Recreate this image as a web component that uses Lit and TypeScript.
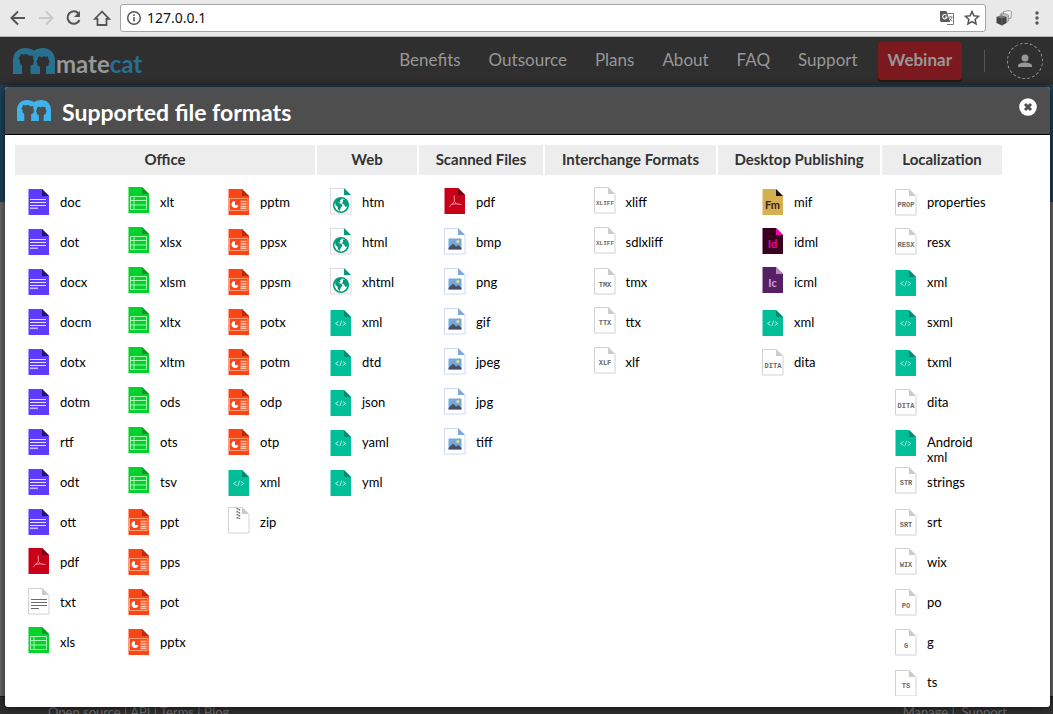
import { LitElement, html, svg, css } from "lit";
import { customElement, property } from "lit/decorators.js";

type Entry = [icon: string, label: string];
interface Category {
  title: string;
  lists: Entry[][];
}

const all = (icon: string, names: string): Entry[] =>
  names.split(" ").map((name) => [icon, name] as Entry);

const categories: Category[] = [
  {
    title: "Office",
    lists: [
      [...all("doc", "doc dot docx docm dotx dotm rtf odt ott"), ["pdf", "pdf"], ["txt", "txt"], ["xls", "xls"]],
      [...all("xls", "xlt xlsx xlsm xltx xltm ods ots tsv"), ...all("ppt", "ppt pps pot pptx")],
      [...all("ppt", "pptm ppsx ppsm potx potm odp otp"), ["xml", "xml"], ["zip", "zip"]],
    ],
  },
  { title: "Web", lists: [[...all("htm", "htm html xhtml"), ...all("xml", "xml dtd json yaml yml")]] },
  { title: "Scanned Files", lists: [[["pdf", "pdf"], ...all("img", "bmp png gif jpeg jpg tiff")]] },
  {
    title: "Interchange Formats",
    lists: [[["xliff", "xliff"], ["xliff", "sdlxliff"], ["tmx", "tmx"], ["ttx", "ttx"], ["xlf", "xlf"]]],
  },
  {
    title: "Desktop Publishing",
    lists: [[["fm", "mif"], ["id", "idml"], ["ic", "icml"], ["xml", "xml"], ["dita", "dita"]]],
  },
  {
    title: "Localization",
    lists: [
      [
        ["prop", "properties"],
        ["resx", "resx"],
        ...all("xml", "xml sxml txml"),
        ["dita", "dita"],
        ["xml", "Android xml"],
        ["str", "strings"],
        ["srt", "srt"],
        ["wix", "wix"],
        ["po", "po"],
        ["g", "g"],
        ["ts", "ts"],
      ],
    ],
  },
];

interface Sheet {
  top: number;
  fill: string;
  fold: string;
  edge?: string;
  art: unknown;
}

const tag = (text: string, top: number, y = 17): Sheet => ({
  top,
  fill: "#fff",
  fold: "#cbcbcb",
  edge: "#d2d2d2",
  art: svg`<text x="11" y=${y} text-anchor="middle" font-family="Liberation Mono, monospace" font-weight="bold" font-size=${text.length > 4 ? 6 : 7} fill="#6a6a6a">${text}</text>`,
});

const badge = (text: string, top: number, fill: string, fold: string, ink: string): Sheet => ({
  top,
  fill,
  fold,
  art: svg`<text x="10.5" y="20" text-anchor="middle" font-family="Lato, sans-serif" font-weight="bold" font-size="11" fill=${ink}>${text}</text>`,
});

const sheets: Record<string, Sheet> = {
  doc: {
    top: 3, fill: "#5f3bff", fold: "#26126f",
    art: svg`<path d="M2 10.5h16M2 13.5h16M2 16.5h16" stroke="#e4deff" stroke-width="1.2"/><path d="M2 19.3h8" stroke="#c5b9ff" stroke-width="1.6"/>`,
  },
  txt: {
    top: 2, fill: "#fff", fold: "#cbcbcb", edge: "#d2d2d2",
    art: svg`<path d="M3 11.500h16M3 14.500h16M3 17.500h16M3 20.500h8" stroke="#6c6c6c" stroke-width="1.2"/>`,
  },
  xls: {
    top: 1, fill: "#03d22b", fold: "#079a22",
    art: svg`<path d="M2.500 9.500h16v13h-16zM2.500 13.500h16M2.500 18h16M6 9.500v13" fill="none" stroke="#a9f3b5"/>`,
  },
  ppt: {
    top: 3, fill: "#fa4616", fold: "#b52d0b",
    art: svg`<path d="M1.500 9.500h18.500v12H1.500z" fill="none" stroke="#ff9d75"/><path d="M7 12a3.500 3.500 0 1 0 3.500 4H7z" fill="#fff"/><path d="M12.500 12.500h6M12.500 15h6M12.500 17.500h6M12.500 19.500h6" stroke="#ffc7b0" stroke-width="1.400"/>`,
  },
  pdf: {
    top: 2, fill: "#c8001a", fold: "#7b0013",
    art: svg`<path d="M10.300 7.500v6l-5 5.500M10.300 13.500l2.700 2.500 4.500 .5M7 16.500l6-.8" fill="none" stroke="#f3a9b2" stroke-width=".9"/>`,
  },
  xml: {
    top: 4, fill: "#00bf98", fold: "#078b70",
    art: svg`<path d="M8.500 11.500l-3 2 3 2M12.800 11.500l3 2-3 2M11.600 10.800l-1.800 5.400" fill="none" stroke="#a5eadb"/>`,
  },
  zip: {
    top: 1, fill: "#fff", fold: "#cbcbcb", edge: "#d2d2d2",
    art: svg`<path d="M9.300 1v11M11.300 2v10" stroke="#777" stroke-width="1.800" stroke-dasharray="1.500 1.500"/>`,
  },
  htm: {
    top: 2, fill: "#fff", fold: "#009b7c", edge: "#dcdcdc",
    art: svg`<circle cx="11" cy="17" r="7.300" fill="#fff" stroke="#009b7c" stroke-width="1.600"/><path d="M5 14.500c.5-2.500 3-4.500 5.500-4.500l1.500 1-2 1.500 .5 1.500-2.500 1 3 .5 1.500 2-2 2.500-.5 3-2-1.500-.5-3-2-1.500zM13 11.500l2.500 .5 2.500 3-.5 3.500-2 .5-1.500-2.500-2-1 1-2z" fill="#009b7c"/>`,
  },
  img: {
    top: 2, fill: "#fff", fold: "#78a9d8", edge: "#ccd9f3",
    art: svg`<path d="M4.500 10.500h13v11h-13z" fill="#78a9d8"/><circle cx="13.800" cy="13.400" r="1.500" fill="#e9dc86"/><path d="M4.500 20l4.500-4.500 3 3 2.500-1.500 3 3v1.500h-13z" fill="#47506b"/>`,
  },
  xliff: tag("XLIFF", 1, 18),
  tmx: tag("TMX", 2, 19),
  ttx: tag("TTX", 1, 18),
  xlf: tag("XLF", 1, 18),
  dita: tag("DITA", 3, 19),
  prop: tag("PROP", 3, 18),
  resx: tag("RESX", 2, 19),
  str: tag("STR", 1, 18),
  srt: tag("SRT", 3, 18),
  wix: tag("WIX", 2, 19),
  po: tag("PO", 3, 19),
  g: tag("G", 3, 19),
  ts: tag("TS", 4, 18),
  fm: badge("Fm", 3, "#d5b053", "#1d1714", "#3b1d16"),
  id: badge("Id", 2, "#37001f", "#ff00b4", "#f000a8"),
  ic: badge("Ic", 1, "#562064", "#bd82c6", "#d69bdd"),
};

@customElement("file-icon")
export class FileIcon extends LitElement {
  @property() kind = "doc";

  static styles = css`
    :host { display: block; width: 22px; height: 30px; flex: none; }
    svg { display: block; }
  `;

  render() {
    const s = sheets[this.kind];
    const outline = s.edge ? "M.5 .5h13.500l7 7v18.500H.5z" : "M.5 0h13.500l7 7v19H.5z";
    return html`<svg width="22" height="30" viewBox="0 0 22 30" aria-hidden="true">
      <g transform="translate(0 ${s.top})">
        <path d=${outline} fill=${s.fill} stroke=${s.edge ?? "none"}></path>
        ${s.art}
        <path d="M14 0l7 7h-7z" fill=${s.fold}></path>
      </g>
    </svg>`;
  }
}

@customElement("cat-mark")
export class CatMark extends LitElement {
  static styles = css`
    :host { display: block; }
    svg { display: block; width: 100%; height: 100%; }
  `;

  render() {
    return html`<svg viewBox="0 0 42 26" preserveAspectRatio="none" aria-hidden="true">
      <path fill="currentColor" d="M0 26V12C0 5 5 0 12 0c3.500 0 6.500 1 9 2.500C23.500 1 26.500 0 30 0c7 0 12 5 12 12v14h-9v-7.500c2-.3 3-1.500 2.800-3l.7-2-1-2L35 8.500l-2.500 .3-1.500-.6-2 1-2.500-1-1.500 1-.5 2.500-1 2 1 2c-.2 1.800 .8 2.800 2.500 2.800V26h-9.500v-8.500c2 0 3-1 3-2.500l.5-2-1-2.500 .5-2-1.500-1-2 .3L13 6l-2.500 .8L8 6l-1 2-1.500 2.500L7 12.500c-1 1.500 0 4 2 4.500V26z"></path>
    </svg>`;
  }
}

@customElement("app-root")
export class AppRoot extends LitElement {
  static styles = css`
    :host {
      display: flex;
      flex-direction: column;
      height: 100vh;
      overflow: hidden;
      font-family: Lato, "Open Sans", sans-serif;
      font-size: 13px;
      color: #000;
    }
    * { box-sizing: border-box; }
    button { border: 0; padding: 0; background: none; font: inherit; color: inherit; }
    svg { display: block; }
    a { color: inherit; text-decoration: none; }

    .browser {
      display: flex;
      align-items: center;
      flex: none;
      height: 37px;
      padding: 0 10px 1px 9px;
      gap: 9px;
      background: #e9e9e9;
      border-bottom: 1px solid #b4b4b4;
      color: #555;
    }
    .address {
      display: flex;
      align-items: center;
      flex: 1;
      height: 28px;
      padding: 0 5px;
      gap: 5px;
      background: #fff;
      border: 1px solid #a5a5a5;
      border-radius: 3px;
    }
    .address input {
      flex: 1;
      min-width: 0;
      border: 0;
      padding: 0;
      outline: 0;
      font: 14px "Noto Sans", sans-serif;
      color: #111;
      background: none;
    }
    .tools { display: flex; gap: 9px; }
    .extras { display: flex; gap: 18px; }
    .nav-buttons { display: flex; gap: 8px; }

    .stage { position: relative; flex: 1; min-height: 0; display: flex; flex-direction: column; }
    .site-header {
      display: flex;
      align-items: center;
      flex: none;
      height: 48px;
      padding: 0 10px 0 13px;
      background: #2f2f2f;
      color: #979797;
      font-size: 17px;
    }
    .brand { display: flex; align-items: center; gap: 1px; margin-right: auto; }
    .brand cat-mark { width: 42px; height: 26px; color: #27708f; }
    .brand-name { font-weight: bold; font-size: 24px; line-height: 26px; padding-top: 6px; }
    .brand-name em { font-style: normal; color: #27708f; }
    .site-nav { display: flex; align-items: center; gap: 28px; }
    .site-nav a { padding-bottom: 2px; line-height: 36px; }
    .site-nav .webinar {
      margin-left: -8px;
      padding: 0 10px 2px;
      border-radius: 3px;
      background: #7b191e;
      box-shadow: 0 2px 1px #1c1c1c;
      font-weight: bold;
    }
    .divider { width: 1px; height: 22px; margin: 0 22px; background: #555; }
    .user {
      display: grid;
      place-items: center;
      width: 36px;
      height: 36px;
      border: 1px dashed #979797;
      border-radius: 50%;
    }
    .hero { flex: none; height: 117px; background: #1c435c; }
    .page { flex: 1; background: #6b6b6b; }
    .site-footer {
      display: flex;
      justify-content: space-between;
      flex: none;
      height: 18px;
      padding: 5px 46px 0 48px;
      background: #2f2f2f;
      border-top: 1px solid #1d1d1d;
      color: #6e6e6e;
      line-height: 20px;
    }

    .modal {
      position: absolute;
      inset: 50px 3px 7px 5px;
      display: flex;
      flex-direction: column;
      overflow: hidden;
      border-radius: 3px;
      background: #fff;
      z-index: 1;
    }
    .shade {
      position: absolute;
      inset: 50px 3px 7px 5px;
      border-radius: 3px;
      box-shadow: 0 0 10px rgba(0, 0, 0, 0.7);
    }
    .modal-header {
      display: flex;
      align-items: center;
      flex: none;
      height: 48px;
      padding: 0 13px 0 12px;
      gap: 11px;
      background: #4e4e4e;
      border-bottom: 1px solid #000;
      color: #fff;
    }
    .modal-header cat-mark { width: 34px; height: 21px; color: #3fb3ec; }
    .modal-header h2 { flex: 1; margin: 0; padding-top: 2px; font-size: 23px; line-height: 28px; font-weight: bold; }
    .close { align-self: flex-start; margin-top: 11px; }

    .formats {
      display: grid;
      grid-template-columns: 300fr 100fr 124fr 171fr 162fr 120fr;
      gap: 2px;
      padding: 10px 48px 0 10px;
    }
    .formats h3 {
      margin: 0 0 11px;
      padding-bottom: 2px;
      background: #ededed;
      color: #333;
      font-size: 15px;
      line-height: 28px;
      text-align: center;
      white-space: nowrap;
    }
    .lists { display: flex; justify-content: center; }
    .lists ul { flex: 0 1 100px; margin: 0; padding: 0 0 0 13px; list-style: none; }
    .lists.wide ul { flex-basis: 120px; }
    .lists li { display: flex; height: 40px; gap: 10px; }
    .label { max-width: 62px; padding-top: 9px; line-height: 15px; }
  `;

  render() {
    return html`
      <div class="browser">
        <div class="nav-buttons">
          <button aria-label="Back"><svg width="18" height="18" fill="none" stroke="#555" stroke-width="2"><path d="M16 9H3M9 2.500L2.500 9 9 15.500"/></svg></button>
          <button aria-label="Forward" disabled><svg width="20" height="18" fill="none" stroke="#c9c9c9" stroke-width="2"><path d="M4 9h13M11 2.500L17.500 9 11 15.500"/></svg></button>
          <button aria-label="Reload"><svg width="20" height="18" fill="none" stroke="#555" stroke-width="2"><path d="M15.500 4.500A6.200 6.200 0 1 0 16.500 11"/><path d="M17 2v6h-6z" fill="#555" stroke="none"/></svg></button>
          <button aria-label="Home"><svg width="20" height="18" fill="none" stroke="#555" stroke-width="1.800"><path d="M11 2.500L4 9.800h2.500V16h9V9.800H18z"/></svg></button>
        </div>
        <div class="address">
          <svg width="16" height="16" fill="none" stroke="#555" stroke-width="1.500"><circle cx="8" cy="8" r="6.300"/><path d="M8 7v4.500M8 4.300v1.700"/></svg>
          <input aria-label="Address" value="127.0.0.1" />
          <div class="tools">
            <button aria-label="Translate"><svg width="16" height="16"><path d="M6 3.500h8.500v11H8" fill="#fff" stroke="#777"/><path d="M1 1h6.500l3.500 11H2.500L1 11z" fill="#5a5a5a"/><path d="M7.500 5.200A2.200 2.200 0 1 0 8 7H6" fill="none" stroke="#fff" stroke-width="1.100"/><path d="M9.500 7h4M11.500 6v1M13 7c-.5 2-1.500 3-3 4M10.500 8.500l2.500 3" fill="none" stroke="#777" stroke-width=".9"/></svg></button>
            <button aria-label="Bookmark"><svg width="16" height="16"><path d="M8 1.500l1.900 4.300 4.700 .5-3.500 3.100 1 4.600L8 11.600 3.900 14l1-4.600L1.400 6.300l4.700-.5z" fill="none" stroke="#555" stroke-width="1.500"/></svg></button>
          </div>
        </div>
        <div class="extras">
          <button aria-label="Extension"><svg width="18" height="18"><path d="M5.500 4.500l3-.7M8.500 5V2.500l6.500-1 1.500 1.500-.5 6-2.500 1" fill="#f4f4f4" stroke="#999"/><path d="M4.500 6l5-1.500 4 1.500v6l-3 2" fill="#c4c4c4" stroke="#888" stroke-width=".8"/><path d="M1.500 8l5-1.500L11.500 8v6L7 16.500 1.500 14z" fill="#444"/><path d="M1.500 8l5-1.500 5 1.500L7 9.500z" fill="#777"/><path d="M7 9.500v7" stroke="#666" stroke-width=".8"/></svg></button>
          <button aria-label="Menu"><svg width="12" height="18" fill="#555"><circle cx="6" cy="4" r="1.700"/><circle cx="6" cy="9" r="1.700"/><circle cx="6" cy="14" r="1.700"/></svg></button>
        </div>
      </div>

      <div class="stage">
        <header class="site-header">
          <a class="brand" href="#"><cat-mark></cat-mark><span class="brand-name">mate<em>cat</em></span></a>
          <nav class="site-nav">
            ${["Benefits", "Outsource", "Plans", "About", "FAQ", "Support"].map((t) => html`<a href="#">${t}</a>`)}
            <a class="webinar" href="#">Webinar</a>
          </nav>
          <span class="divider"></span>
          <button class="user" aria-label="Account"><svg width="16" height="14" fill="#979797"><circle cx="8" cy="4" r="3.500"/><path d="M1 13V11.500C1 9.500 5 8.500 8 8.500s7 1 7 3V13z"/></svg></button>
        </header>
        <div class="hero"></div>
        <main class="page"></main>
        <footer class="site-footer">
          <span><a href="#">Open source</a> | <a href="#">API</a> | <a href="#">Terms</a> | <a href="#">Blog</a></span>
          <span><a href="#">Manage</a> | &nbsp;<a href="#">Support</a></span>
        </footer>

        <div class="shade"></div>
        <section class="modal" role="dialog" aria-labelledby="title">
          <div class="modal-header">
            <cat-mark></cat-mark>
            <h2 id="title">Supported file formats</h2>
            <button class="close" aria-label="Close"><svg width="18" height="18"><circle cx="9" cy="9" r="8.800" fill="#fff"/><path d="M6 6l6 6M12 6l-6 6" stroke="#4e4e4e" stroke-width="3"/></svg></button>
          </div>
          <div class="formats">
            ${categories.map(
              (c) => html`<section>
                <h3>${c.title}</h3>
                <div class="lists ${c.title === "Localization" ? "wide" : ""}">
                  ${c.lists.map(
                    (list) => html`<ul>
                      ${list.map(([icon, label]) => html`<li><file-icon .kind=${icon}></file-icon><span class="label">${label}</span></li>`)}
                    </ul>`
                  )}
                </div>
              </section>`
            )}
          </div>
        </section>
      </div>
    `;
  }
}
